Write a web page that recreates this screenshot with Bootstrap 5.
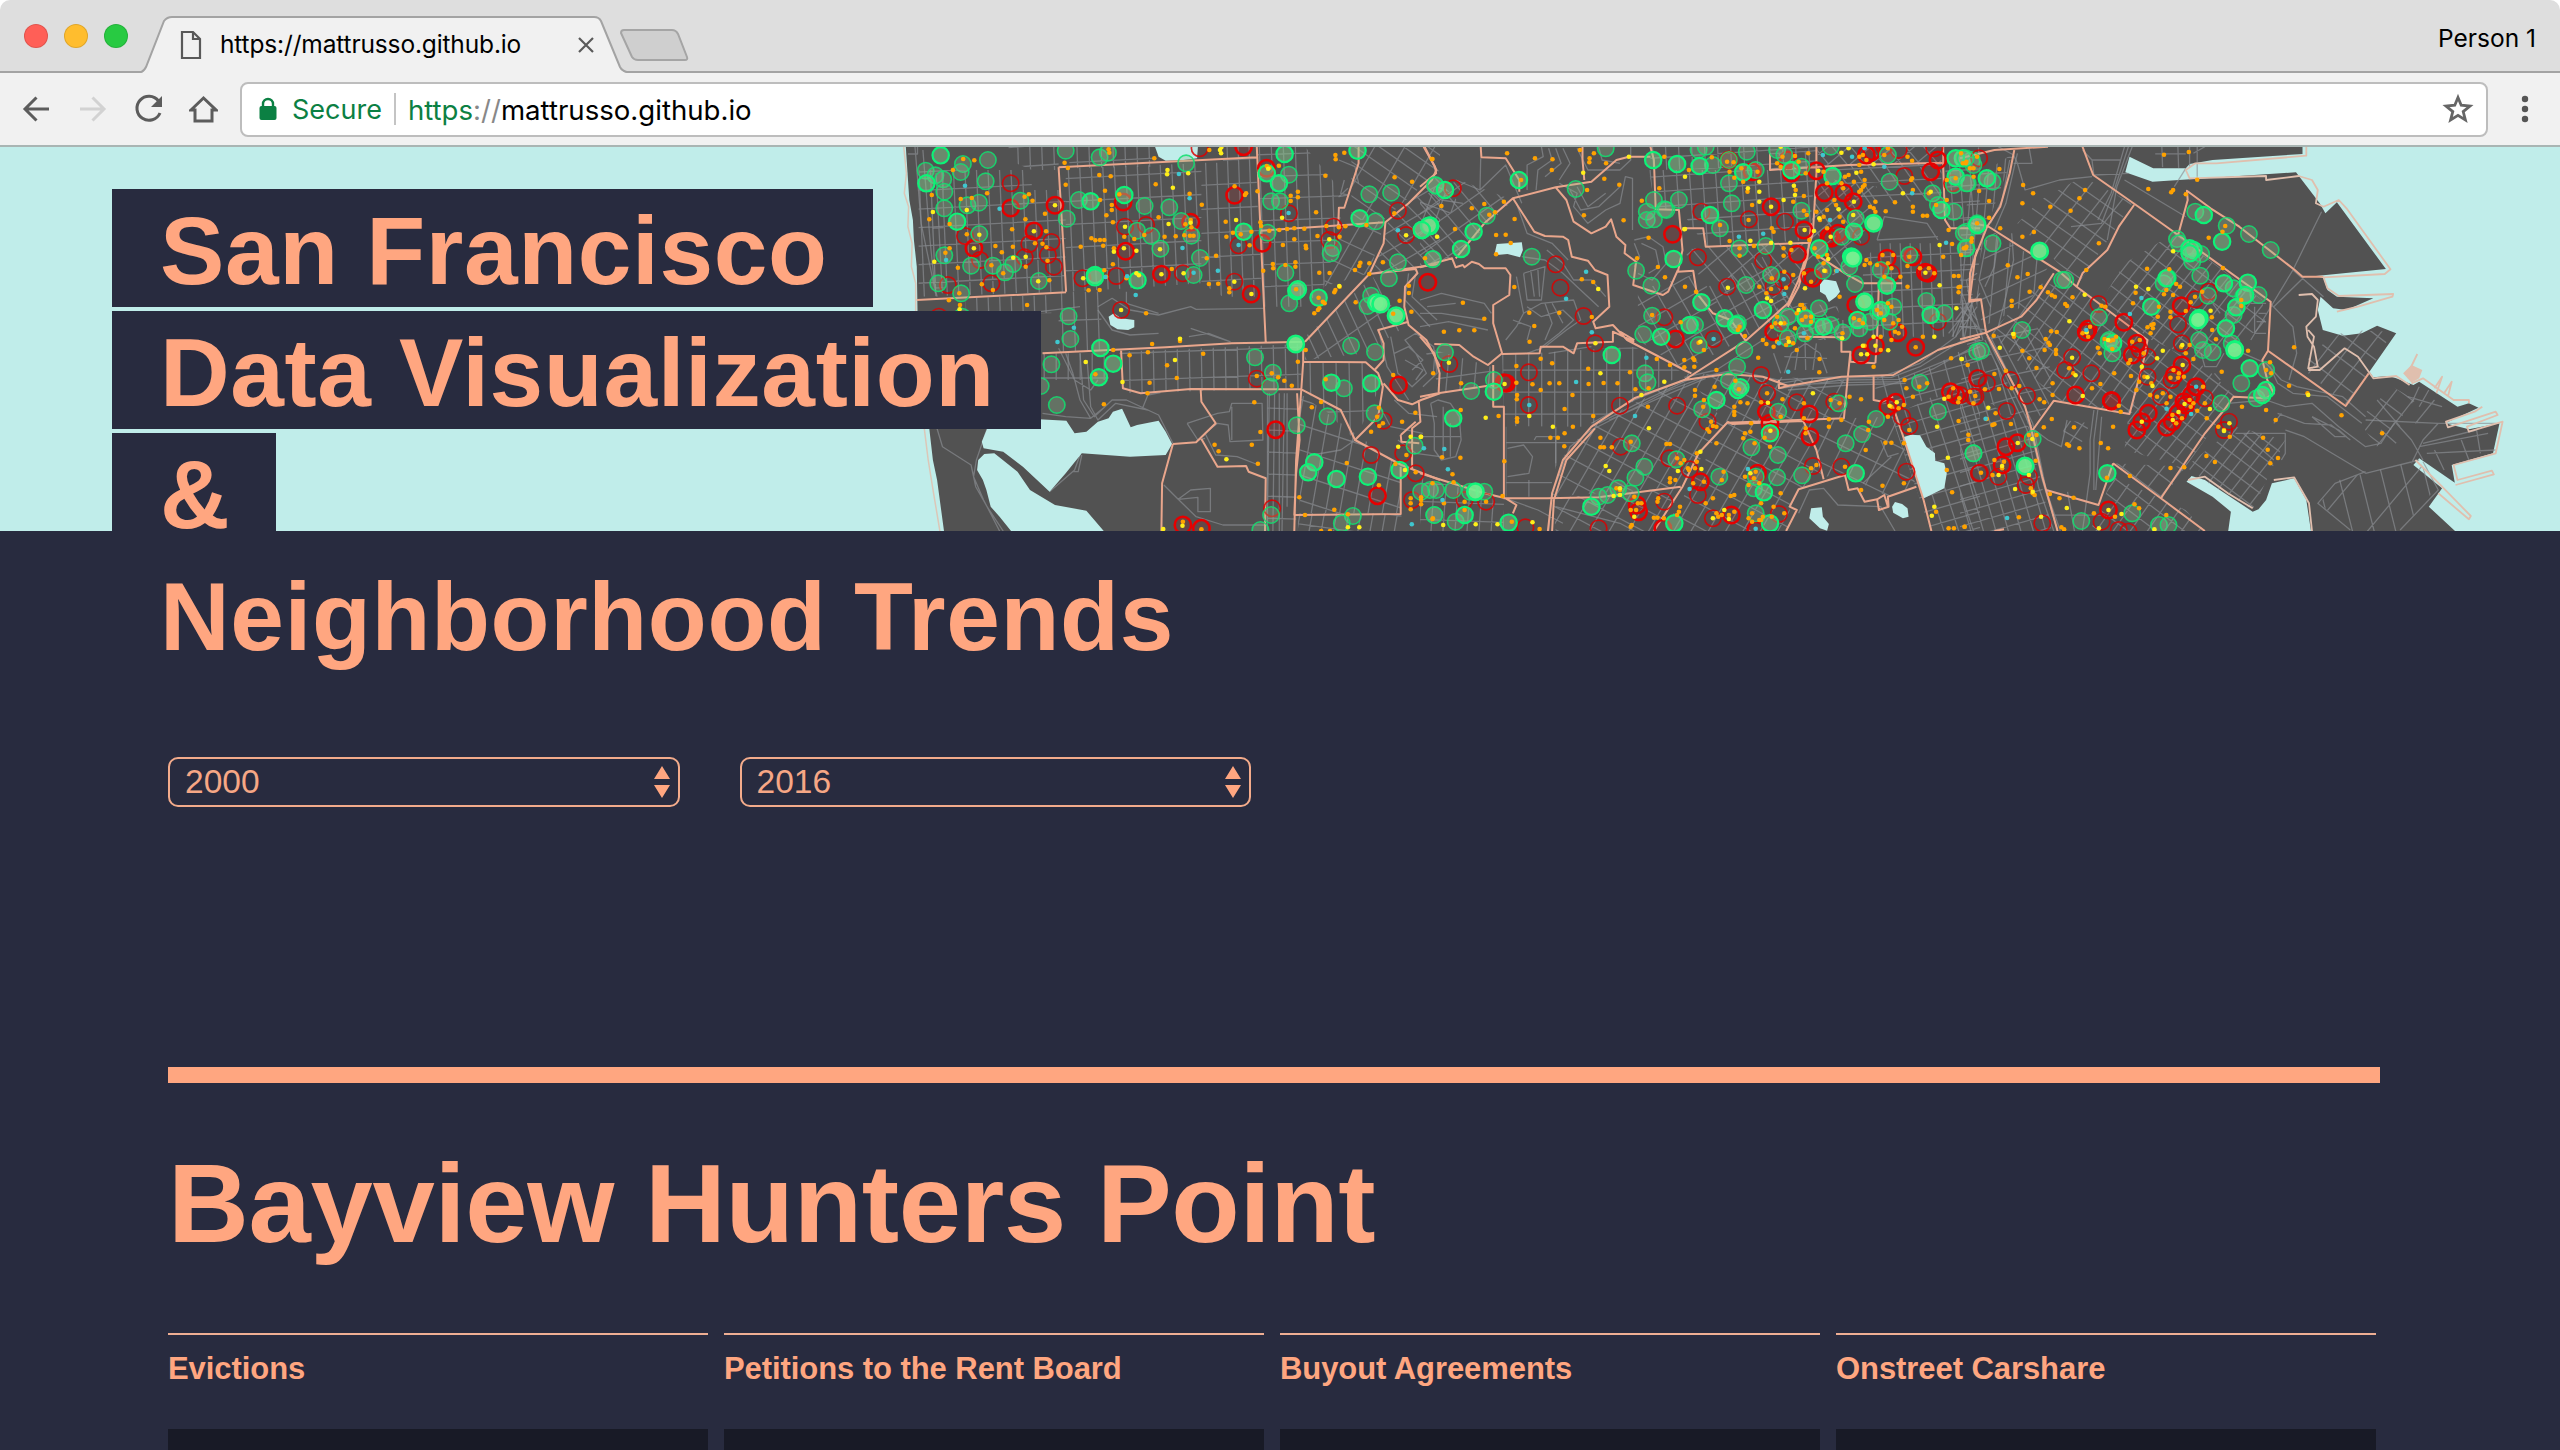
<!DOCTYPE html>
<html lang="en">
<head>
<meta charset="utf-8">
<title>San Francisco Data Visualization</title>
<link href="https://cdn.jsdelivr.net/npm/bootstrap@5.3.0/dist/css/bootstrap.min.css" rel="stylesheet">
<style>
:root{--peach:#ffa680;--navy:#282b3f;--water:#c0edea;--land:#525252}
body{background:#fff;font-family:"Liberation Sans",Arial,sans-serif;overflow:hidden;height:1450px;color:var(--peach)}
.chrome-ui{font-family:Inter,"Open Sans",sans-serif;color:#000}
.tabstrip{height:73px;background:#dedede;border-bottom:2px solid #a3a3a3;border-radius:10px 10px 0 0;padding-left:24px}
.light{width:24px;height:24px;border-radius:50%;border:1px solid rgba(0,0,0,.12)}
.browser-tab{width:486px;height:57px;margin:0 0 -2px 13px;align-self:flex-end;position:relative;padding-left:39px}
.browser-tab>svg.tab-shape{position:absolute;left:0;top:0;z-index:0}
.browser-tab>*:not(.tab-shape){position:relative;z-index:1}
.tab-text{font-size:24.5px;margin-left:18px;width:302px;white-space:nowrap;letter-spacing:-.15px}
.toolbar{height:74px;background:#f1f1f1;border-bottom:2px solid #a9b5b3;padding:9px 29px 9px 22px}
.omnibox{height:55px;background:#fff;border:2px solid #bdbdbd;border-radius:8px;margin-left:22px;font-size:27px;padding-left:17px;padding-right:12px;white-space:nowrap}
.divider{width:2px;height:32px;background:#c4c4c4;margin:0 12px 0 12px}
.secure{color:#0b8043;margin-left:15px;padding-top:3px}
.address{font-size:27.6px;padding-top:3px}
.page{background:var(--navy);height:1303px;position:relative}
.hero-map{position:absolute;left:0;top:0;width:2560px;height:384px;background:var(--water)}
.page-body{position:relative;padding-top:42px}
.title-line{display:block;width:max-content;height:118px;margin:0 0 4px 112px;padding:6px 46px 0 48px;background:var(--navy);font-size:96.5px;line-height:111px;font-weight:700;white-space:nowrap;letter-spacing:.6px;color:var(--peach)}
.content{width:2212px;margin-left:168px}
.pickers{padding-top:80px;gap:60px}
.picker{width:511.5px;position:relative}
.picker .form-select{height:50px;background:none;border:2px solid #f3ab8b;border-radius:10px;color:#f6a785;font-size:33.5px;line-height:38px;padding:4px 15px 4px}
.picker svg{position:absolute;right:10px;top:9px}
.thick-rule{height:16px;background:var(--peach);margin-top:260px}
.place{font-size:112px;line-height:112px;font-weight:700;margin:65px 0 73px;letter-spacing:-.3px;white-space:nowrap}
.metrics{gap:16px}
.metric{width:540px}
.metric h3{border-top:2px solid #eeae93;font-size:31px;line-height:40px;font-weight:700;letter-spacing:-.07px;padding-top:14px;margin-bottom:40px;white-space:nowrap}
.chart-box{height:30px;background:#181a26}
</style>
<script src="https://cdn.jsdelivr.net/npm/bootstrap@5.3.0/dist/js/bootstrap.bundle.min.js"></script>
</head>
<body>
<header class="chrome-ui">
  <div class="tabstrip d-flex align-items-center">
    <div class="d-flex" style="gap:16px">
      <span class="light" style="background:#ff5f57"></span>
      <span class="light" style="background:#ffbd2e"></span>
      <span class="light" style="background:#28ca42"></span>
    </div>
    <div class="browser-tab d-flex align-items-center">
      <svg class="tab-shape" width="486" height="57" viewBox="0 0 486 57"><path d="M0 57Q3 56 5 51L23 5Q26 1 31 1H453Q458 1 460 5L479 51Q481 56 486 57Z" fill="#f1f1f1"/><path d="M0 56Q3 55 5 51L23 5Q26 1 31 1H453Q458 1 460 5L479 51Q481 55 486 56" fill="none" stroke="#a3a3a3" stroke-width="2"/></svg>
      <svg width="22" height="30" viewBox="0 0 22 30" fill="none" stroke="#595959" stroke-width="2.2"><path d="M2 2H13L20 9V28H2Z"/><path d="M13 2V9H20"/></svg>
      <span class="tab-text">https://mattrusso.github.io</span>
      <svg width="16" height="16" viewBox="0 0 16 16" style="margin-left:56px" stroke="#5a5a5a" stroke-width="2.2"><path d="M1 1L15 15M15 1L1 15"/></svg>
    </div>
    <svg width="70" height="34" viewBox="0 0 70 34" style="margin-left:-7px;margin-top:21px"><path d="M4 1H52Q56 1 58 5L67 28Q68 31 65 31H18Q14 31 12 28L1 4Q1 1 4 1Z" fill="#cfcfcf" stroke="#a5a5a5" stroke-width="2"/></svg>
    <span class="ms-auto" style="font-size:24.5px;margin-right:24px;margin-top:6px">Person 1</span>
  </div>
  <div class="toolbar d-flex align-items-center">
    <svg width="28" height="28" viewBox="0 0 28 28" fill="none" stroke="#5c5c5c" stroke-width="3"><path d="M27 14H3M14.500 2.500L3 14L14.500 25.500"/></svg>
    <svg width="28" height="28" viewBox="0 0 28 28" fill="none" stroke="#d2d2d2" stroke-width="3" style="margin-left:29px"><path d="M1 14H25M13.500 2.500L25 14L13.500 25.500"/></svg>
    <svg width="30" height="30" viewBox="0 0 30 30" style="margin-left:27px"><path d="M24.500 7A12 12 0 1 0 26 19" fill="none" stroke="#5c5c5c" stroke-width="3"/><path d="M28 2V13H17Z" fill="#5c5c5c"/></svg>
    <svg width="29" height="28" viewBox="0 0 29 28" fill="none" stroke="#5c5c5c" stroke-width="3" style="margin-left:25px"><path d="M2 15L14.500 3L27 15H23V26H6V15Z"/></svg>
    <div class="omnibox d-flex align-items-center flex-grow-1">
      <svg width="18" height="24" viewBox="0 0 18 24"><rect x="0.500" y="9" width="17" height="14" rx="2" fill="#0b8043"/><path d="M4 10V7A5 5 0 0 1 14 7V10" fill="none" stroke="#0b8043" stroke-width="2.400"/></svg>
      <span class="secure">Secure</span><span class="divider"></span>
      <span class="address"><span style="color:#0b8043">https</span><span style="color:#888">://</span>mattrusso.github.io</span>
      <svg class="ms-auto" width="32" height="32" viewBox="0 0 32 32" fill="none" stroke="#666" stroke-width="2.800"><path d="M16 4.500L19.200 12.200L28 13L21.200 18.600L23.400 27L16 22.400L8.600 27L10.800 18.600L4 13L12.800 12.200Z"/></svg>
    </div>
    <svg width="8" height="28" viewBox="0 0 8 28" fill="#555" style="margin-left:33px;margin-right:2px"><circle cx="4" cy="4" r="3.200"/><circle cx="4" cy="14" r="3.200"/><circle cx="4" cy="24" r="3.200"/></svg>
  </div>
</header>

<main class="page">
  <svg class="hero-map" id="map" viewBox="0 0 2560 384"></svg>
  <div class="page-body">
    <h1 class="m-0">
      <span class="title-line">San Francisco</span>
      <span class="title-line">Data Visualization</span>
      <span class="title-line">&amp;</span>
      <span class="title-line">Neighborhood Trends</span>
    </h1>
    <div class="content">
      <div class="pickers d-flex">
        <div class="picker"><select class="form-select" aria-label="From"><option>2000</option></select><svg width="16" height="32" viewBox="0 0 16 32" fill="#ffa680"><path d="M8 0L16 13H0ZM0 19H16L8 32Z"/></svg></div>
        <div class="picker"><select class="form-select" aria-label="To"><option>2016</option></select><svg width="16" height="32" viewBox="0 0 16 32" fill="#ffa680"><path d="M8 0L16 13H0ZM0 19H16L8 32Z"/></svg></div>
      </div>
      <div class="thick-rule"></div>
      <h2 class="place">Bayview Hunters Point</h2>
      <div class="metrics d-flex">
        <section class="metric"><h3>Evictions</h3><div class="chart-box"></div></section>
        <section class="metric"><h3>Petitions to the Rent Board</h3><div class="chart-box"></div></section>
        <section class="metric"><h3>Buyout Agreements</h3><div class="chart-box"></div></section>
        <section class="metric"><h3>Onstreet Carshare</h3><div class="chart-box"></div></section>
      </div>
    </div>
  </div>
</main>

<script>
// The map is surveyed on three sheets (west, centre, east), each with its own units.
const SHEETS={w:[880,2.8],c:[1420,2.8],e:[1960,2.6133]};
const map=document.getElementById('map');
const layers=[];
let clips=0;
const pts=s=>s.trim().split(/\s+/).map(p=>p.split(',').map(Number));
const at=(k,[x,y])=>[+(SHEETS[k][0]+x/SHEETS[k][1]).toFixed(1),+(y/3-7).toFixed(1)];
const line=(k,s)=>s.split('|').map(t=>'M'+pts(t).map(p=>at(k,p).join(' ')).join('L')).join('');
const draw=(k,s,attrs)=>layers.push(`<path d="${line(k,s)}" ${attrs}/>`);
const STREET='fill="none" stroke="#8b8e93" stroke-opacity=".66" stroke-width="1.3" stroke-linejoin="round"';
const ROAD='fill="none" stroke="#e9a68c" stroke-width="2" stroke-linejoin="round"';
const WATER='fill="#c0edea"';

// Street grid inside a neighbourhood outline: two families of parallel lines (angle in degrees, spacing in px)
function grid(k,outline,a1,g1,a2,g2){
  const q=pts(outline).map(p=>at(k,p)),xs=q.map(p=>p[0]),ys=q.map(p=>p[1]);
  const cx=(Math.min(...xs)+Math.max(...xs))/2,cy=(Math.min(...ys)+Math.max(...ys))/2;
  const R=Math.hypot(Math.max(...xs)-cx,Math.max(...ys)-cy)+5;
  let d='';
  for(const [a,g] of [[a1,g1],[a2,g2]]){
    const t=a*Math.PI/180,dx=Math.cos(t),dy=Math.sin(t);
    for(let o=-R;o<=R;o+=g){
      const x=cx-dy*o,y=cy+dx*o;
      d+=`M${(x-dx*R).toFixed(1)} ${(y-dy*R).toFixed(1)}L${(x+dx*R).toFixed(1)} ${(y+dy*R).toFixed(1)}`;
    }
  }
  const id='c'+(++clips);
  layers.push(`<clipPath id="${id}"><polygon points="${q.map(p=>p.join()).join(' ')}"/></clipPath><path clip-path="url(#${id})" d="${d}" ${STREET}/>`);
}

// Land
const west=pts('72,15 82,180 92,240 95,300 103,380 105,515 118,700 138,866 148,960 160,1020 180,1180').map(p=>at('w',p));
const east=pts('700,1180 708,1115 660,1070 592,1025 605,1008 640,1020 690,1058 765,1115 780,1108 800,1080 815,1030 873,1015 905,1080 918,1180 1300,1180 1225,1100 1260,1045 1185,975 1200,955 1293,1028 1285,975 1393,940 1410,850 1330,868 1268,850 1355,803 1330,790 1300,800 1240,755 1200,725 1185,735 1140,715 1120,708 1080,712 1070,695 1140,580 1090,557 1050,580 1000,587 948,570 935,510 942,470 975,505 1010,510 1080,475 985,470 960,450 950,415 930,408 1113,387 985,187 955,220 940,190 878,97 503,125 432,97 443,50 505,85 590,85 600,72 660,60 895,42 895,15').map(p=>at('e',p));
layers.push(`<polygon fill="#525252" points="${west.concat(east).map(p=>p.join()).join(' ')}"/>`);
draw('w','66,15 74,100 68,160 80,200 78,260 90,310 88,380 100,430 100,515|124,866 135,960 150,1060 168,1175','fill="none" stroke="#dcc7b8" stroke-width="1.5"');

// Streets: west
grid('w','108,90 425,90 425,150 520,150 520,455 108,470',-3,18.500,87.500,11.500);
grid('w','140,100 178,100 178,460 155,460',-3,60,87,7);
grid('w','520,85 900,70 900,430 700,445 520,455',-3,23,87.500,11.500);
grid('w','360,20 500,20 500,90 425,90 360,60',-4,20,88,12);
grid('w','530,20 770,20 770,80 530,85',-3,26,88,12);
grid('w','900,68 960,68 960,20 1055,20 1055,140 1070,470 960,470 900,430',-3,24,88,11);
grid('w','1055,20 1190,20 1290,150 1290,260 1240,450 1180,500 1075,500',-2,22,88,12);
grid('w','240,475 480,465 480,520 240,520',-3,60,88,11.500);
grid('w','500,455 620,455 620,630 500,640',-2,40,88,12);
grid('w','670,635 1180,612 1180,745 680,760',-2,27,89,12);
grid('w','1190,665 1370,668 1400,740 1330,900 1190,750',-2,70,89,13);
grid('w','455,640 640,640 640,720 455,720',0,26,90,12);
grid('w','1085,760 1170,760 1165,1173 1085,1173',2,22,91,15);
grid('w','1175,760 1460,980 1460,1120 1175,1120',18,24,100,14);
grid('w','1170,1120 1460,1120 1460,1175 1170,1175',8,22,100,12);
grid('w','1190,590 1380,410 1470,560 1360,640 1190,660',65,12,-35,40);
grid('w','1240,440 1290,260 1415,240 1370,400',-60,14,25,22);
grid('w','1420,250 1568,100 1568,370 1380,400',45,13,-30,16);
grid('w','1320,20 1568,20 1568,90 1410,240 1320,240',35,14,-60,26);
draw('w','78,42 105,42 105,20|98,20 115,250 150,430 160,470|120,30 140,300 155,460|160,866 175,920 255,975 268,1040 300,1100 345,1173|300,866 270,960 262,1010 290,1080 335,1173|475,1055 545,990 560,945|565,945 555,995 540,995|105,560 560,500|500,625 545,720 590,750 610,720|520,640 540,700 560,780 590,835|610,500 650,475 700,510 780,525 870,500 885,508 1075,505|690,455 690,490 780,520|610,510 650,570 700,585 780,580|870,565 980,605 920,580 865,590|560,640 570,780 600,830 650,780 690,780 780,825 820,910|580,660 590,800 610,840 660,790 750,810|455,820 520,830 590,835 630,800|735,805 750,765 785,758|860,850 945,820 978,815 985,790 1070,790 1072,900 980,905 975,855 945,850 910,880 940,945 1000,950 1060,975|860,850 890,900 910,895|985,800 985,900|795,1035 835,1078 890,1072 890,1115 925,1115 925,1045 870,1050 835,1078 885,1130 960,1155 1080,1155|1085,760 1085,1170|1105,760 1100,1173|1118,760 1118,1173|1140,760 1140,1100|1300,120 1290,160 1310,165 1285,170 1310,145|1285,60 1330,80 1340,130|1430,590 1450,700 1490,740 1530,700 1500,640 1470,600 1500,580 1550,620 1560,700 1520,740|1470,660 1520,690 1500,720|1440,640 1480,620 1520,660 1490,690|1400,590 1420,680 1480,780|1210,945 1290,930 1330,900|1400,800 1430,860 1520,880|1440,780 1480,820 1560,830|1450,900 1500,940 1568,950|1480,400 1470,480 1540,560|1500,400 1490,470 1560,540',STREET);
// Streets: centre
grid('c','0,170 110,120 260,180 100,350 0,380',50,13,-35,17);
grid('c','640,90 980,90 980,40 1110,30 1090,300 800,320 730,210 660,210',-4,15,86,13);
grid('c','640,20 1110,20 1110,80 650,90',-4,14,87,13);
grid('c','1110,80 1460,65 1460,180 1250,190 1110,110',-3,14,55,14);
grid('c','1110,20 1460,20 1460,70 1120,75',-40,14,50,14);
grid('c','1110,110 1280,140 1250,260 1200,420 1080,380 1090,310',-40,14,55,15);
grid('c','1240,370 1280,310 1545,310 1535,590 1290,590 1180,580 1180,540 1240,540',-3,17,88,10);
grid('c','1470,70 1568,20 1568,260 1480,260',-4,16,86,10);
grid('c','230,645 600,620 740,700 470,860 235,858',0,22,90,13);
grid('c','240,860 470,860 380,980 360,1070 240,1070',0,40,90,50);
grid('c','470,860 730,720 860,845 730,1040 370,1070 400,950',28,20,120,14);
grid('c','740,700 980,710 1190,720 1185,835 860,850',28,19,118,14);
grid('c','860,850 1070,845 1130,1020 1040,1060 1030,1173 680,1173',28,21,120,15);
grid('c','370,1075 730,1040 680,1173 380,1173',28,20,120,17);
grid('c','1080,835 1190,835 1330,830 1390,1040 1310,1070 1190,1005 1130,1010',26,24,116,19);
grid('c','1320,830 1568,700 1568,1173 1430,1173',-16,15,72,14);
grid('c','1275,710 1400,700 1568,600 1568,740 1340,800 1275,790',-15,17,75,16);
grid('c','610,450 780,400 900,600 740,690 610,600',-30,18,60,18);
grid('c','790,450 960,350 1050,500 900,600',62,12,-30,17);
grid('c','740,330 800,320 1080,310 1050,480 960,470 770,400',50,14,-40,22);
grid('c','1000,480 1170,500 1180,600 1000,600',-20,13,60,13);
grid('c','10,620 200,680 200,740 60,760',-8,26,95,14);
grid('c','0,1010 235,1080 235,1173 0,1173',2,18,94,12);
grid('c','0,170 60,130 120,200 0,260',20,20,110,12);
draw('c','170,55 168,150 240,75 285,190|100,120 168,150|20,140 60,180 120,190|340,20 345,50 300,75 300,150|360,25 370,60 330,90 325,150|380,25 395,70 350,110|400,25 420,70 390,120|440,25 470,90 560,90 590,60 590,20|500,20 510,60 560,70|390,130 440,160 430,200 470,250 520,210 560,190 575,110 595,115 595,270|420,150 450,210 500,200 560,140|440,140 470,200 520,160|600,300 640,290 680,320 690,370 650,420 610,400|620,310 660,330 670,380 640,400|600,310 615,350 600,380|270,190 300,280 370,310 415,360|290,400 300,480 340,480 350,380 290,400|310,390 320,470|330,390 335,470|270,410 290,520 340,490 430,480 450,540 410,570 350,620 300,640|290,520 270,560 240,600|300,500 340,530 400,510 430,540 390,580 330,630|260,540 310,560 300,600|350,490 370,550 350,600|370,490 400,550|0,480 60,460 180,490 200,520|0,520 60,520 180,540|0,560 80,545 190,570|20,500 100,490|30,790 40,850 40,930 60,960 100,950 115,900 110,830 85,790 50,780 30,790|65,800 65,950|85,850 85,950|0,890 115,890|245,925 290,915 315,950 305,1000 245,1010|320,900 325,890 380,890 380,970|305,1020 305,1070|360,1173 370,1060 420,920 480,870|355,330 400,370 430,420 480,420 520,470|285,350 350,360 400,400 440,440 500,500|360,640 480,620|380,1100 560,1150 600,1173|240,1075 330,1110 400,1150|1280,300 1300,230 1420,250 1450,300|1280,300 1450,290|1010,730 1090,715 1180,710|1020,700 1040,640 1080,610 1120,640 1140,700|1050,690 1060,620|1080,690 1078,600|1100,690 1110,610|1020,650 1140,655|990,640 1010,700|1060,1120 1090,1050 1130,1045 1170,1095 1290,1100 1330,1173|1500,540 1540,480 1530,420 1560,400|1490,590 1530,500 1560,540|1500,590 1560,500|1480,580 1568,460|1520,590 1520,480|1540,600 1545,470|1510,560 1560,560|1240,1030 1320,950|1290,900 1310,950 1340,940',STREET);
draw('c','740,712 830,690 960,600 1040,480|750,720 880,690 1000,720 1090,715 1320,712 1400,680 1520,600 1568,600|1010,745 1180,720 1340,718 1430,680 1568,620|1020,735 1190,728 1350,725 1440,685 1568,610|1030,750 1200,735 1360,730|480,850 600,780 740,720|500,850 610,790 760,715|480,870 700,750 800,710|530,840 700,760 800,715|1280,715 1400,670 1500,590 1540,480',STREET);
// Streets: east
grid('e','0,300 30,120 140,40 70,260 30,480 0,490',-3,15,95,8);
grid('e','80,270 230,380 180,490 60,560 40,480',-25,18,95,14);
grid('e','150,250 210,180 320,110 450,190 410,260 310,430',35,15,-52,17);
grid('e','430,370 560,280 790,480 800,560 620,660 560,630 500,600 370,480',37,16,-52,11);
grid('e','80,580 200,430 310,440 490,600 450,820 250,780',-55,12,38,17);
grid('e','80,590 200,560 230,600 240,780 190,860',-12,20,62,13);
grid('e','500,600 640,680 720,770 590,980 430,930 440,820',37,17,-52,12);
grid('e','400,970 590,980 530,1075',37,17,-52,16);
grid('e','590,980 720,860 850,900 765,1110 650,1030',37,15,-52,11.500);
grid('e','400,1010 590,1110 640,1173 340,1173',37,17,-55,14);
grid('e','0,740 180,860 240,1173 0,1173',-16,13,74,12);
grid('e','20,600 60,600 190,860 0,740',-16,16,74,14);
grid('e','910,640 1010,570 1130,575 1070,695 1010,795 910,700',37,20,-52,16);
grid('e','1040,840 1130,740 1190,780 1090,920',37,18,-52,19);
grid('e','990,1020 1200,960 1240,1050 1150,1173 1020,1173 940,1090',76,21,-50,44);
grid('e','510,20 590,20 590,85 510,80',0,20,88,16);
grid('e','270,840 340,850 310,930 270,900',30,14,-55,12);
grid('e','240,1075 400,1000 400,1100 340,1173 240,1173',80,60,0,60);
draw('e','180,20 188,70 140,70|100,20 140,45 150,70 170,150 260,120 345,110|320,30 345,60 420,60|345,60 350,105 440,100|440,20 400,160 370,250 290,260|430,20 395,160 360,240|450,20 410,140 385,300|600,20 600,80|620,20 620,110|610,40 640,20|430,120 590,230|590,85 560,140|945,215 870,390 760,600|870,390 950,470|810,490 870,560 880,640 860,720|900,410 820,500|770,500 770,580 800,580|780,520 800,520|775,545 800,545|760,490 800,490|690,600 740,640 800,670 840,720 880,740 1000,770 1060,830|810,680 830,730 870,760 960,770 1050,850|700,790 800,780 850,800 920,790 990,860 1060,920 1100,910 1140,840|830,820 900,850 970,855 1020,900|840,820 820,850|920,830 990,870 1010,890 980,890 920,830|850,870 900,890 1060,1000|720,880 850,880 850,940 840,960|740,880 820,960|1060,1000 1200,960|1060,840 1250,850 1400,850|1190,850 1240,780|1170,770 1260,800|1200,740 1180,790|1225,750 1200,800|1140,850 1180,900 1210,960|1250,850 1210,900 1180,970|1200,920 1380,880|1210,910 1350,870|1220,940 1400,930|1240,930 1265,990|1310,900 1330,960|1350,870 1360,940|1100,870 1140,910|1090,780 1150,860|1060,995 980,1030 935,1090 1020,1170|1210,965 1250,1050 1150,1170|350,810 340,900 340,1000 320,1173|360,810 350,900 350,1050|370,830 355,1050|630,640 640,680 670,680 690,640|660,490 680,520|665,700 680,720|195,870 230,900 265,920 280,840',STREET);
draw('e','70,590 180,850 215,1020 255,1173|80,590 190,850 225,1050 262,1173|65,600 175,870 205,1040 245,1173|0,500 60,580|5,460 50,590|20,450 60,600|30,490 10,600|0,560 70,570|70,300 50,420 80,500|100,290 90,380 65,440|130,60 110,180 80,250|150,40 120,190 90,270|135,280 140,360 120,470 100,560',STREET);

// Lakes and bays
draw('w','300,866 320,830 522,842 545,880 578,875 610,845 640,835 652,815 678,806 702,862 720,855 780,842 800,875 818,912 800,945 700,950 565,940 520,1000 475,1055 400,980 345,935 290,925 285,905',WATER);
draw('w','272,990 275,960 292,942 320,940 350,965 385,995 420,1050 490,1095 578,1112 632,1180 372,1180 335,1130 310,1100 298,1050 288,1020',WATER);
draw('w','770,20 890,20 888,55 850,60 800,62 780,50',WATER);
draw('w','640,530 655,520 675,535 712,540 712,562 695,570 665,568 645,555',WATER);
draw('c','215,312 285,307 288,330 280,352 245,342 208,346',WATER);
draw('c','1120,432 1132,418 1165,424 1176,455 1165,470 1145,486 1135,465 1120,455',WATER);
draw('c','1352,892 1375,884 1400,886 1418,920 1442,940 1442,962 1468,970 1475,1000 1468,1045 1408,1076 1392,1020 1372,960',WATER);
draw('c','1095,1105 1125,1102 1128,1130 1145,1152 1140,1172 1120,1165 1090,1135',WATER);
draw('c','1322,1100 1330,1086 1350,1092 1365,1105 1368,1130 1352,1135 1325,1118',WATER);

// Main roads
draw('w','500,82 1055,52|500,82 521,455|103,480 521,457|1055,20 1068,330 1080,605|1065,272 1415,247|1340,20 1340,70 1300,203 1285,203 1283,262|1415,247 1480,190 1545,120 1558,90 1525,20|1415,247 1410,310 1370,402|455,640 800,622 985,610 1190,605|1190,605 1370,402 1568,372|1185,605 1185,665 1360,667 1395,700 1408,740 1395,830 1330,900|1185,665 1180,745 1165,960 1160,1173|675,632 680,745 730,760 870,747 1180,748 1290,810 1330,900 1460,975 1568,1020|898,750 900,785 940,850 885,907 820,912|820,912 790,1030 788,1173|900,897 945,980 1025,978 1032,995 1080,1015 1078,1173|1168,760 1175,900 1165,1000 1160,1125 1458,1122 1458,980|1368,402 1500,387 1505,400 1470,440 1468,500 1480,555 1530,600 1568,680|1480,545 1395,570 1410,610 1410,660 1385,690|1410,730 1450,780 1490,793 1515,780 1568,760|1508,780 1513,845 1490,865 1490,985|1458,885 1500,845|1458,885 1460,905 1510,910',ROAD);
draw('c','0,140 45,100 42,80 10,20|170,20 172,52 240,55 278,120 278,155|100,355 180,250 260,175 380,142 480,125 550,60 585,50 645,50|455,20 455,60 460,120|260,175 320,275 350,288 400,290 415,300 425,350 470,362 490,390 525,405 530,500 485,545 492,565 540,555 580,600 740,690 760,700|380,142 410,180 430,245 480,280 520,260 535,238 550,290 575,315 573,340 605,365 597,435 680,465 695,455 722,390|0,382 90,355 100,382 120,375 125,382 145,365 165,372 180,385 240,385 253,405 250,465 205,495 205,550 230,640 190,675 150,650 110,615 40,612|230,642 335,640 338,620 400,620 430,640 440,610 540,605 540,575 600,605|0,590 40,640 55,700 52,758|0,770 50,760 205,735 205,675|205,675 205,800 235,800 235,1075 355,1075|0,1000 180,1060 240,1075 270,1095 260,1120|645,20 655,60 660,208 725,210 735,330 722,395 765,392 775,460 820,520 870,540 912,602|735,265 793,265 800,320 1090,308|1110,20 1110,100 1100,280 1060,420 1030,490 912,602 740,720 600,775 480,860 400,960 370,1060 358,1173|1095,250 1085,350 1060,440 1030,500|980,40 980,90 1200,75 1465,68|1465,20 1465,80 1470,240 1485,265 1568,265|1105,340 1190,400 1240,430 1350,430|1285,430 1280,590 1275,670|1060,590 1180,592 1180,635 1205,635 1205,665 1275,670|740,720 860,702 960,710 1030,738 1180,710 1325,705 1450,630 1568,590|1205,635 1197,720 1187,835 860,848 780,940 735,1040 655,1173|860,845 875,852 1075,843|1270,705 1270,780 1295,785 1325,770|1005,720 1005,745 1030,738|355,1075 500,1072 730,1040|1070,835 1110,930 1130,1018|1025,1173 1055,1110 1035,1100 1060,1048 1190,1005 1200,1050 1225,1045 1245,1085 1280,1078 1285,1110 1312,1100 1310,1070 1390,1040|1280,1078 1300,1065 1310,1100|1325,800 1350,880 1410,1080 1432,1173|1560,330 1540,400 1538,485 1568,480|560,575 600,600|370,1173 375,1080 410,960 490,865',ROAD);
draw('e','0,55 90,30 230,20|142,30 130,100 105,200 70,262 40,350 25,480 55,478 68,578 170,800 185,860 215,1010 255,1173|0,598 68,578 160,530 200,480 245,400|30,250 72,258 260,395 305,440 490,600 480,660 443,822 245,782 190,870|320,20 348,105 460,195 570,285 812,485 805,632 1008,798 1068,700|455,195 415,260 385,330 320,400 305,440|570,285 595,180 593,152 655,205 730,260 875,390 895,410 950,410|805,632 790,660 803,720 820,760 800,775 715,770 690,810 640,880 525,1075|400,970 525,1075 640,1173|400,970 362,1095 225,1050|90,1173 115,1168',ROAD);
draw('e','905,20 905,47 670,70 615,70 590,90 600,115 800,108 800,120 885,108 920,120 935,150 930,190 950,200 990,180 1010,205 1125,388 1110,402 950,412 960,445 990,468 1132,462 1130,470 1040,500 985,515|885,465 920,462 935,480 930,530 905,560 908,590 925,620 935,680 910,685 925,590 910,570|910,690 940,690 1005,625 1040,650 1080,715 1140,708 1175,735|1175,690 1195,642|1180,730 1210,715 1290,780 1330,780 1330,790|1240,745 1260,710 1245,760|1265,760 1285,725 1275,770|1365,800 1345,815 1270,845 1275,862 1400,815 1405,825 1325,860 1330,875 1418,845 1400,940 1290,975 1300,1020 1390,992 1395,1003 1295,1035|1190,960 1260,1040 1335,1128 1330,1138 1250,1060|596,1020 640,1010 700,1060 765,1105|820,1020 873,1012 912,1090 920,1173','fill="none" stroke="#e0bfae" stroke-width="1.8" stroke-linejoin="round"');
draw('e','1158,700 1180,675 1208,690 1200,715 1180,728','fill="#e0bfae"');

// Data circles and dots
function circles(k,s,kind){
  const st={r:'fill="#d00" fill-opacity=".02" stroke="#dc0000" stroke-opacity=".85" stroke-width="1.7"',
    g:'fill="#8fbc8f" fill-opacity=".3" stroke="#10e070" stroke-opacity=".85" stroke-width="1.6"',
    R:'fill="#d00" fill-opacity=".12" stroke="#e60000" stroke-width="2.500"',
    G:'fill="#86c98c" fill-opacity=".48" stroke="#0df277" stroke-width="2.200"',
    H:'fill="#76f090" fill-opacity=".9" stroke="#12f57a" stroke-width="2.600"'}[kind];
  for(const p of pts(s)){const [x,y]=at(k,p);layers.push(`<circle cx="${x}" cy="${y}" r="8.200" ${st}/>`)}
}
function dots(k,s,color){for(const p of pts(s)){const [x,y]=at(k,p);layers.push(`<circle cx="${x}" cy="${y}" r="2.300" fill="${color}"/>`)}}

circles('w','366,130 238,288 480,306 418,312 470,345 405,352 487,380 190,435 312,430 686,260 745,255 567,415 662,408 848,400 992,425 1145,220 1004,316 1270,260 1258,300 1450,212 1473,285 1533,427 1055,716 1410,842 1375,945 1465,940 1500,1000 1098,1105 1490,1080 895,25 280,360 165,530 675,510','r');
circles('w','366,204 490,196 263,325 431,273 681,186 688,334 788,403 1039,462 993,166 1070,310 870,247 1452,735 1108,869 1393,1067 848,1155 900,1165 1018,20 1082,85','R');
circles('w','232,72 226,96 302,60 296,124 128,92 155,106 177,118 180,155 180,205 245,196 277,188 393,182 278,282 180,346 255,377 316,377 373,372 350,397 163,430 227,460 445,423 520,32 615,52 638,38 523,236 557,180 741,198 810,202 843,243 872,287 760,288 720,272 785,326 896,354 878,405 1145,104 1095,184 1120,184 1268,324 1262,340 1135,398 1146,490 1370,163 1431,158 1388,244 1450,367 1425,415 1555,135 1547,358 1375,467 1365,498 528,529 533,597 480,673 495,795 1050,652 1100,698 1092,740 1319,617 1386,636 1299,745 1253,829 1385,820 1167,856 1497,917 1324,1128 1293,1150 1095,1125 1065,1170 1515,1055 1540,1050 1552,1125 857,70 450,738 1085,278 230,530','g');
circles('w','170,46 130,130 216,245 590,184 684,165 602,405 602,412 721,421 1083,100 1117,130 1018,275 1133,42 1343,235 1166,453 1170,448 1228,473 1337,32 617,624 653,671 613,712 1264,728 1376,730 1216,967 1199,997 1278,1017 1366,1010 1455,990 1518,270','G');
circles('w','1390,488 1402,492 1445,527 1164,612 1540,257','H');
circles('c','92,145 380,373 393,443 458,528 490,610 305,697 305,795 82,672 788,215 778,352 1022,245 961,362 990,440 1016,420 921,238 684,532 860,440 822,597 560,797 955,705 972,760 1055,787 720,797 805,845 562,920 698,955 755,988 684,1085 778,1065 500,1165 1160,785 1180,980 1362,995 1350,830 1370,858 1356,108 1300,20 820,1135 1005,1122 1100,978 1320,400 1090,410 1235,290 295,1162 185,1085 125,1080 1490,130 1440,25 1340,30 1450,545 1560,715 1555,770 1565,1000','r');
circles('c','22,427 707,283 1132,158 1187,158 1213,185 1075,270 1145,290 1152,295 1100,415 1057,343 1110,92 983,200 1040,100 930,95 1250,45 1265,35 1450,60 235,728 242,730 715,597 990,575 970,815 980,850 982,876 1090,822 1092,890 1332,787 1310,800 1485,755 1500,765 785,1025 608,1095 612,1115 872,1125 945,1000 1308,355 1380,350 1422,400 1415,397 1275,617 1235,645 1338,578 1388,622 940,1170 1220,495 1430,95 865,60 1030,60 680,1165 1170,280','R');
circles('c','36,357 313,350 43,137 187,227 436,147 70,637 207,720 143,753 45,1050 93,1050 40,1125 100,1145 140,1055 180,1055 655,180 725,180 635,215 690,210 635,240 655,238 685,208 873,190 840,265 605,392 648,437 650,527 625,583 780,615 895,325 968,318 983,405 913,435 1068,212 1128,392 1315,125 1180,290 865,130 820,75 865,60 780,30 1000,30 1020,45 1068,80 940,90 1370,345 1220,235 1290,390 1218,432 1202,380 1325,500 1305,435 1418,483 1468,520 1315,545 1117,505 1283,515 1030,530 1010,550 1030,595 1078,580 1112,560 1150,555 1183,577 1230,565 1260,545 908,630 888,680 865,722 890,550 770,555 630,700 637,727 790,808 1003,815 1172,790 1400,728 1450,815 1277,837 1238,882 1192,910 1002,945 928,922 593,910 718,958 628,980 603,1013 590,1060 555,1045 525,1065 500,1070 838,1010 1000,1012 1070,1006 935,1045 940,1120 940,1010 1435,160 1450,195 1495,215 1495,135 1530,130 1530,275 1560,255 1530,325 1500,110 1545,60 1550,940 1560,635 1310,45 520,25 800,20 915,35 1150,20','g');
circles('c','70,150 277,120 150,275 25,257 115,327 653,60 720,72 783,78 905,97 812,225 710,357 1155,108 1215,275 788,487 755,555 675,590 853,535 885,555 960,510 1080,535 1130,560 1040,90 1118,325 1225,540 1290,510 1430,525 1308,437 537,645 207,755 93,835 830,780 890,750 897,742 480,1100 125,1125 248,1148 712,1150 963,1057 1220,1000 980,1150 1460,210 1520,55 1500,55 1500,110 5,270 980,880','G');
circles('c','1270,250 1208,350 1212,355 1245,485 155,1055','H');
circles('e','362,492 615,478 650,455 570,553 490,710 275,690 293,652 343,700 132,720 175,767 122,813 48,715 70,730 35,770 52,998 100,1010 172,1035 215,1150 490,650 553,720 525,770 640,775 690,870 703,845 580,610 440,1175 415,1170 370,1145 0,765 50,55 615,740 470,630 180,1010','r');
circles('e','428,547 578,497 330,577 335,567 462,610 450,645 302,765 120,920 150,908 110,975 580,675 560,705 618,740 605,765 590,795 570,820 555,845 540,862 492,820 475,845 462,870 388,1110 585,785 396,782 396,782 396,782','R');
circles('e','35,75 20,130 85,310 15,325 85,125 267,420 275,420 162,570 55,632 35,940 190,897 317,1143 450,1120 520,1155 545,1155 363,532 398,640 388,605 532,430 543,413 615,215 697,257 755,282 812,330 567,297 572,310 607,365 628,407 648,467 780,465 715,445 740,470 715,525 630,342 625,600 635,630 660,637 710,610 735,730 800,690 683,790 775,775 15,55 45,250 10,280 390,600','g');
circles('e','637,225 685,305 600,325 610,330 600,340 540,415 690,430 752,428 745,465 722,502 695,565 500,500 800,750 790,765 757,685 385,1000 400,610 70,115 45,255 718,628','G');
circles('e','208,333 170,978 625,535 622,540 718,630','H');

const O='#ffa200',Y='#ffef1a',C='#3fc7cf';
dots('w','233,57 264,61 204,90 145,165 226,177 257,174 300,160 138,238 195,252 195,325 243,283 183,338 218,383 285,433 316,450 222,460 193,481 224,495 412,495 345,400 312,376 405,170 417,163 427,182 462,221 407,238 370,268 465,274 323,318 341,337 372,320 434,310 455,311 466,322 408,380 469,362 474,421 517,68 526,84 520,134 640,28 642,38 614,105 646,109 630,152 616,180 649,195 649,210 634,226 652,247 592,295 603,301 616,300 628,300 625,317 562,320 652,373 628,391 633,410 584,451 615,450 655,325 684,290 712,297 740,285 797,290 828,289 852,286 868,287 878,287 870,240 872,262 768,55 772,133 780,232 867,161 901,194 915,355 941,347 947,431 921,432 817,387 745,520 690,415 762,612 840,603 905,641 653,630 699,646 750,637 804,676 831,714 755,728 749,760 627,793 855,253 993,139 1025,160 1057,154 968,245 970,290 988,278 1010,283 1040,275 1035,316 978,445 978,457 1083,78 1117,77 1090,83 1300,38 1275,45 1276,58 1247,107 1150,167 1170,155 1170,172 1150,183 1221,217 1065,247 1067,258 1090,272 1118,270 1140,267 1160,265 1188,266 1250,258 1285,262 1303,259 1362,255 1160,298 1128,315 1192,317 1193,325 1225,288 1287,290 1100,372 1101,385 1163,367 1163,380 1230,398 1259,399 1073,392 1135,375 1165,448 1370,402 1330,390 1342,378 1345,368 1370,370 1408,367 1332,487 1272,457 1287,440 1275,450 1240,485 1245,490 1228,473 1230,505 1226,510 1216,520 1455,482 1481,437 1481,459 1441,112 1490,125 1440,220 1437,521 1488,515 1192,630 1170,665 1055,708 1097,700 1115,712 1132,722 1153,737 1248,718 1235,786 1048,787 1209,802 1065,876 1041,914 1058,971 937,914 948,934 1397,803 1392,830 1408,850 1398,858 1375,875 1499,818 1462,845 1437,705 1549,700 1307,969 1397,1036 1486,1075 1486,1090 1515,1072 1515,1093 1486,1108 1547,1030 1547,1137 1272,1109 1190,1125 1310,1123 1174,1072 1235,1173 1260,1173 848,1145 900,1168 1500,997 1474,945 1443,972 1547,57 922,30 603,703 670,163 1022,165',O);
dots('w','148,216 243,210 152,365 373,353 443,424 808,252 820,143 863,100 804,103 805,90 997,240 1126,233 569,415 655,335 683,325 718,332 718,400 850,400 675,510 840,596 576,666 826,660 679,726 970,958 1286,438 1040,462 1258,298 1473,286 1486,890 1515,890 1451,920 1470,990 1342,1162 1310,1162 793,1167 847,1157 431,274 490,196 263,325 278,284 408,350 686,260 784,328 788,403 992,425 725,406 1087,86 956,22 955,40 1560,290 952,30 870,248 223,508',Y);
dots('w','238,137 335,206 837,102 867,175 847,324 946,392 692,409 631,411 878,398 716,465 543,563 497,606 1144,219 1004,315 1450,271 1489,1153 1523,925 185,360',C);
dots('c','244,40 322,55 371,58 369,90 33,57 60,198 98,267 145,205 180,192 194,224 210,217 265,237 213,285 240,284 254,309 213,343 14,355 235,185 283,120 448,30 487,40 475,55 474,67 521,70 516,116 558,134 468,150 459,226 570,241 264,441 453,418 485,426 120,488 306,518 390,518 320,558 180,536 67,575 110,571 152,571 307,605 481,531 338,656 370,670 471,686 588,697 270,678 363,730 390,730 472,732 514,729 553,730 338,750 315,733 427,765 272,765 271,778 405,807 485,828 220,828 272,845 272,835 428,860 405,880 365,893 386,893 404,919 505,893 505,922 515,922 537,922 114,810 113,953 62,952 270,728 115,730 236,964 94,1027 91,1003 67,1090 3,1080 125,1085 185,1085 36,1135 125,1110 231,1068 335,1167 257,1145 608,355 640,293 666,381 686,412 621,182 670,145 742,440 773,455 650,525 730,547 684,50 753,90 817,52 860,65 878,67 867,95 880,113 900,85 945,95 905,125 917,155 930,195 920,240 840,255 867,303 895,325 895,347 935,318 985,265 990,275 1018,325 1018,347 1040,330 1045,185 1075,168 1052,150 1000,70 1015,50 1010,80 1060,65 1080,100 1050,48 1087,40 1075,212 1083,225 1110,215 1130,230 1140,210 1165,195 1160,180 1120,240 1140,265 1175,230 1185,245 1090,300 1105,325 1115,350 1140,345 1130,370 1165,392 1135,393 1075,400 1095,425 1045,405 1025,443 950,440 983,447 985,415 970,460 1020,395 780,608 795,630 768,660 768,680 740,660 765,655 740,682 700,675 663,657 890,570 910,588 895,560 985,560 995,550 1000,530 1000,605 960,600 970,612 990,620 1020,550 1055,520 1065,495 1075,505 1050,565 1070,495 1070,540 1080,530 1095,545 1095,530 1085,595 1030,595 1025,615 1045,610 1055,630 1183,580 1230,540 1215,535 1240,550 1280,510 1290,520 1300,540 1310,490 1320,500 1340,540 1325,550 1350,560 1340,580 1330,575 1320,600 1290,590 1245,617 1290,630 1270,680 1388,622 1408,590 1119,657 1118,697 947,653 640,745 603,748 770,750 770,767 638,800 880,800 880,825 880,815 825,740 795,780 815,845 820,858 805,868 810,875 897,787 917,790 893,748 883,722 830,690 793,800 972,760 955,787 1015,778 1010,830 1075,790 1075,835 1080,865 1080,880 927,850 925,875 910,880 905,895 937,910 980,920 965,893 690,912 700,912 590,905 720,955 740,960 730,970 715,1020 700,1015 700,1027 750,985 753,990 775,965 770,985 775,940 830,860 830,910 850,995 845,1020 795,1025 765,1030 600,1070 610,1090 620,1090 590,1110 605,1110 590,1160 593,1155 550,1045 560,1050 667,1075 665,1085 665,1133 655,1133 683,1135 728,1100 725,1115 720,1125 800,1090 820,1075 870,1068 880,1065 830,1120 835,1130 845,1125 865,1125 880,1115 920,1135 930,1120 930,1145 950,1140 955,1140 990,1100 985,1130 960,1130 955,1090 950,1030 910,1010 920,1035 940,995 935,1015 1010,1060 1020,1120 1110,975 1095,985 1190,980 1150,780 1175,790 1203,770 1235,778 1145,838 1145,860 1180,840 1257,845 1255,870 1310,830 1320,800 1340,805 1355,795 1362,745 1357,720 1398,740 1420,730 1380,770 1370,870 1303,908 1320,908 1248,930 1355,910 1235,1050 1295,1037 1355,1030 1490,1057 1475,990 1535,900 1508,843 1480,770 1507,787 1493,745 1510,775 1540,755 1487,655 1445,1115 1480,1165 1525,1160 1495,1165 1130,95 1140,130 1180,130 1185,145 1190,110 1215,125 1200,105 1235,95 1230,75 1250,60 1240,45 1230,50 1240,140 1235,150 1245,120 1245,135 1230,155 1275,185 1260,200 1270,205 1275,215 1304,214 1300,45 1310,25 1378,62 1365,50 1380,200 1380,215 1330,187 1378,115 1375,120 1380,150 1408,227 1420,227 1370,350 1365,378 1400,385 1425,385 1440,400 1365,440 1345,410 1325,345 1295,345 1280,375 1310,370 1320,385 1250,360 1245,375 1260,370 1465,350 1495,408 1508,408 1508,442 1508,457 1515,345 1530,320 1490,312 1480,270 1545,295 1560,250 1500,115 1475,120 1520,70 1530,65 1550,110 1540,85 1515,40 1560,50 1425,160 1475,180 1445,195 1175,470 1300,410',O);
dots('c','585,50 457,98 499,447 491,610 81,668 505,700 237,732 306,828 184,833 2,890 372,860 520,978 641,865 684,725 742,110 742,267 740,268 918,145 950,155 950,125 950,185 925,302 983,200 983,308 1037,308 1047,137 1050,165 1103,273 1077,270 1115,92 1118,235 1132,392 1143,357 1078,445 983,483 972,475 785,605 1033,605 1010,550 1060,510 1100,760 1018,180 1172,208 1215,185 1213,225 1222,98 1270,73 1352,160 1430,155 1455,315 1455,436 1415,398 1502,505 1517,657 1311,631 1235,643 1252,643 1240,617 1275,617 1335,787 1315,797 1468,776 1448,860 1478,953 1440,1100 1433,1127 1270,590 974,788 981,872 788,987 820,1135 852,1110 865,1137 925,1000 722,993 785,935 560,1065 542,1068 315,1147 65,1155 156,1153 217,1153 862,443 1150,290 1180,38 1200,25 560,1045 600,1130 530,993 620,765 1440,590 1182,595 1010,20',Y);
dots('c','409,476 481,577 634,653 437,726 306,795 68,927 78,988 63,1080 465,395 822,597 602,828 1031,695 1018,418 1020,462 961,281 893,290 1128,45 1148,240 1167,393 1210,50 1300,80 1378,160 1473,308 1005,610 918,987 755,1047 940,1166 1075,580 1245,25',C);
dots('e','533,44 598,36 165,135 191,160 163,190 236,200 289,212 312,175 327,150 492,147 552,157 557,150 590,163 620,119 193,276 163,290 105,265 103,87 76,183 76,233 50,153 125,376 150,412 177,402 363,310 330,390 211,442 182,455 230,457 240,466 248,470 294,472 275,492 280,498 135,482 135,498 141,590 141,582 88,587 253,576 238,574 224,597 231,608 235,615 221,630 251,630 251,642 163,632 181,655 200,684 120,692 20,675 90,702 242,730 242,765 208,778 220,787 240,837 298,862 219,862 280,913 285,917 312,925 368,909 387,925 400,860 22,884 133,852 93,820 90,853 85,855 70,837 102,747 65,748 135,745 155,738 198,962 235,1062 260,1075 297,1073 195,1065 154,1132 12,1160 265,1162 272,1168 350,1120 405,1130 456,1093 468,1105 539,1125 384,1013 444,1008 550,984 586,982 644,948 666,966 811,970 831,954 804,929 792,893 825,840 1103,880 997,826 860,737 908,760 873,622 800,810 737,800 753,632 684,695 659,570 669,598 658,532 687,384 686,275 693,258 650,293 735,498 735,480 633,455 614,470 603,487 557,465 575,440 565,432 547,388 489,386 533,463 539,450 459,458 452,490 520,500 517,530 506,552 504,565 498,580 490,562 500,555 550,532 550,515 590,513 370,497 380,500 400,600 378,597 360,623 408,590 393,602 365,640 398,627 470,600 450,605 445,660 440,670 480,640 447,708 403,700 340,560 320,580 335,590 285,685 296,700 367,732 345,745 415,797 420,815 461,750 468,725 482,710 500,730 497,765 515,770 530,760 540,790 550,770 550,713 558,690 570,713 572,700 585,710 590,640 610,657 600,615 578,620 600,780 603,800 610,790 620,812 640,790 635,740 645,835 675,860 690,870 705,890 555,825 565,850 580,835 810,667 813,700 800,690 35,790 40,768 15,70 35,85 0,440 10,325 15,325 30,305 185,1045 190,1060 180,885 200,885 110,985 90,960 85,1005 55,998 115,965',O);
dots('e','326,464 286,544 104,623 139,582 4,657 293,653 302,706 331,577 460,440 492,447 530,632 515,655 475,680 490,712 503,738 581,615 582,675 655,512 557,334 321,768 475,845 587,792 571,816 556,840 653,807 704,850 690,873 74,803 110,978 101,1005 151,909 189,897 190,1055 144,1047 388,1110 422,1122 279,1104 363,1165 508,1168 387,600 910,765 212,1130 180,1005',Y);
dots('e','474,474 444,522 540,806 604,822 617,740 67,836 123,1134 330,570',C);

map.innerHTML=layers.join('');
</script>
</body>
</html>
